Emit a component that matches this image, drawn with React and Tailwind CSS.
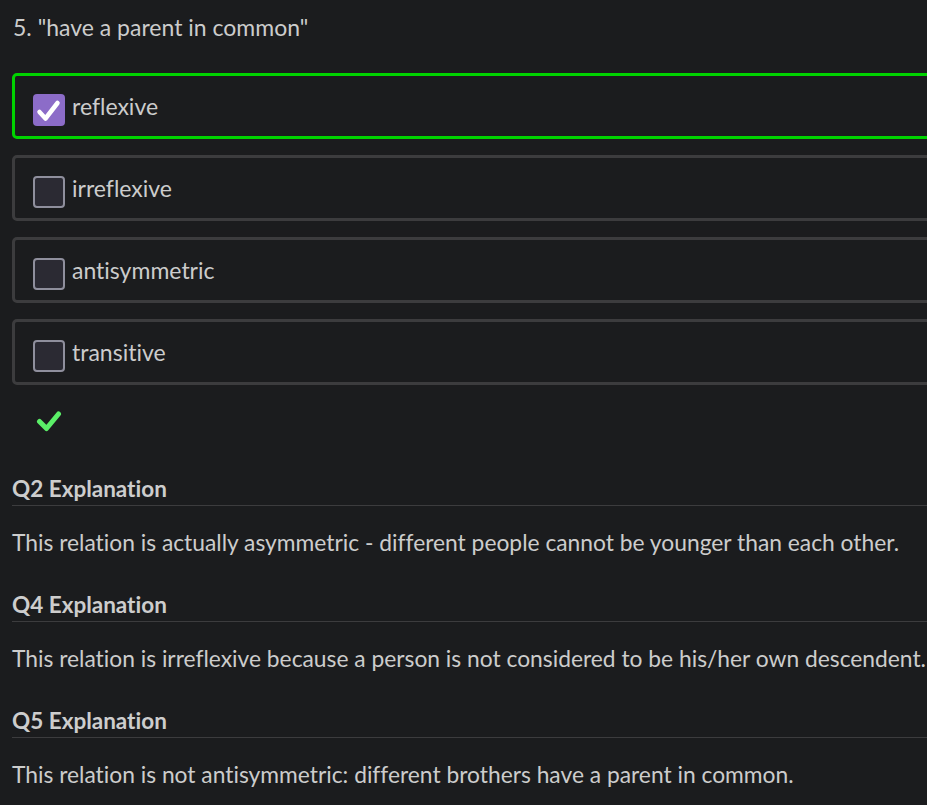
import React from 'react'

const options = [
    { label: 'reflexive', checked: true },
    { label: 'irreflexive', checked: false },
    { label: 'antisymmetric', checked: false },
    { label: 'transitive', checked: false },
]

const explanations = [
    {
        title: 'Q2 Explanation',
        text: 'This relation is actually asymmetric - different people cannot be younger than each other.',
    },
    {
        title: 'Q4 Explanation',
        text: 'This relation is irreflexive because a person is not considered to be his/her own descendent.',
    },
    {
        title: 'Q5 Explanation',
        text: 'This relation is not antisymmetric: different brothers have a parent in common.',
    },
]

function Checkbox({ checked }) {
    if (checked) {
        return (
            <span className="block h-[32px] w-[32px] shrink-0 rounded-[4px] bg-[#8c6cc8]">
                <svg width="32" height="32" viewBox="0 0 32 32">
                    <path
                        d="M6.5 18l6 6.5L24.5 9"
                        fill="none"
                        stroke="white"
                        strokeWidth="4.5"
                        strokeLinecap="round"
                        strokeLinejoin="round"
                    />
                </svg>
            </span>
        )
    }
    return (
        <span className="block h-[32px] w-[32px] shrink-0 rounded-[4px] border-2 border-[#8f8f9d] bg-[#2b2a33]" />
    )
}

export default function App() {
    return (
        <div
            className="min-h-[805px] w-[927px] overflow-hidden bg-[#1b1c1e] pl-[12px] pt-[12px] text-[#cccccc] [font-variant-ligatures:none]"
            style={{ fontFamily: 'Lato, "Liberation Sans", sans-serif' }}
        >
            <div className="pl-px text-[23px] leading-[30px]">
                5. "have a parent in common"
            </div>

            <div className="mt-[31px] flex w-[960px] flex-col gap-[16px]">
                {options.map((opt) => (
                    <label
                        key={opt.label}
                        className={
                            'flex h-[66px] items-center gap-[7px] rounded-[5px] border-[3px] pl-[18px] ' +
                            (opt.checked
                                ? 'border-[#00d300]'
                                : 'border-[#3c3c3e]')
                        }
                    >
                        <span className="mt-[7px]">
                            <Checkbox checked={opt.checked} />
                        </span>
                        <span className="text-[23px] leading-[30px]">
                            {opt.label}
                        </span>
                    </label>
                ))}
            </div>

            <div className="ml-[24px] mt-[25px] h-[22px]">
                <svg width="26" height="22" viewBox="0 0 26 22">
                    <path
                        d="M3.5 11.5l7 7L22.5 4"
                        fill="none"
                        stroke="#5bef68"
                        strokeWidth="5"
                        strokeLinecap="round"
                        strokeLinejoin="round"
                    />
                </svg>
            </div>

            <div className="mt-[42px] flex flex-col">
                {explanations.map((ex) => (
                    <div key={ex.title} className="mb-[33px]">
                        <div className="border-b border-[#3c3c3e] pb-[1px] text-[22.5px] font-bold leading-[30px] text-[#cdcdcd]">
                            {ex.title}
                        </div>
                        <p className="mt-[21px] whitespace-nowrap text-[22.8px] leading-[30px]">
                            {ex.text}
                        </p>
                    </div>
                ))}
            </div>
        </div>
    )
}
